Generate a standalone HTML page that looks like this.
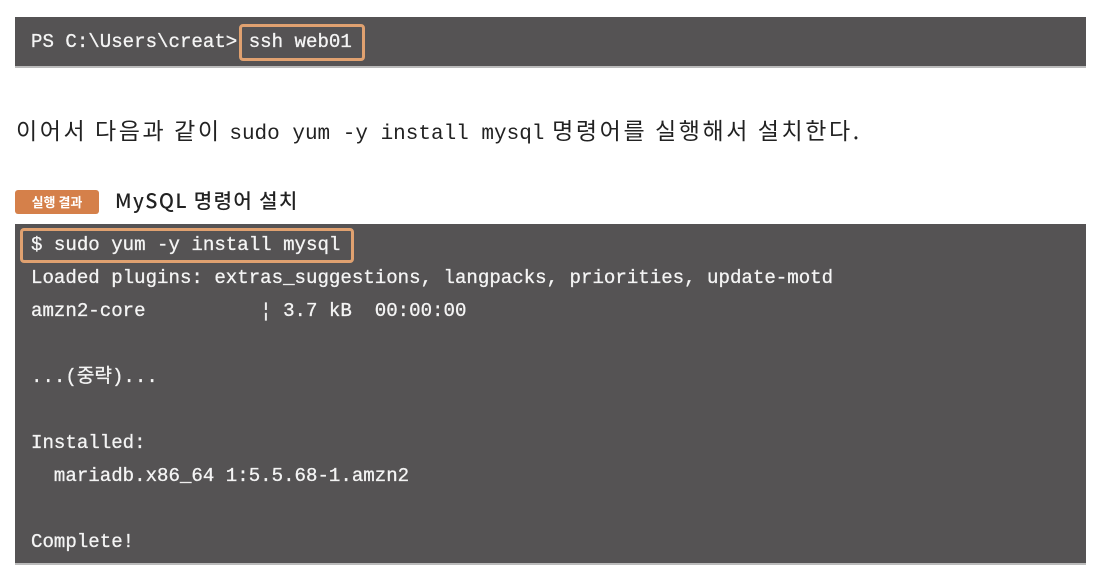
<!DOCTYPE html>
<html><head><meta charset="utf-8"><style>
body{margin:0;width:1098px;height:578px;background:#fff;position:relative;overflow:hidden;font-family:"Liberation Sans","Noto Sans CJK KR",sans-serif}
.mono{font-family:"Liberation Mono","Noto Sans CJK KR",monospace;font-size:19.1px;color:#f4f4f4;white-space:pre;-webkit-text-stroke:0.3px #f4f4f4}
.bar{position:absolute;left:15px;top:17px;width:1071px;height:49px;background:#555354;border-bottom:2px solid #bbb}
.hl{position:absolute;border:3px solid #e0a170;border-radius:4px;box-sizing:border-box}
.t{position:absolute;left:31px;line-height:20px}
</style></head><body>
<div class="bar"></div>
<div class="mono t" style="top:32px">PS C:\Users\creat> ssh web01</div>
<div class="hl" style="left:239px;top:24px;width:126px;height:37px"></div>
<div style="position:absolute;left:16px;top:112px;font-size:23px;letter-spacing:2.6px;color:#222;white-space:nowrap;font-family:'Noto Sans CJK KR',sans-serif">이어서 다음과 같이 <span style="font-family:'Liberation Mono',monospace;font-size:21px;letter-spacing:0">sudo yum -y install mysql</span> 명령어를 실행해서 설치한다.</div>
<div style="position:absolute;left:15px;top:190px;width:84px;height:24px;background:#d5804a;border-radius:3px;color:#fff;font-size:13px;font-weight:bold;text-align:center;line-height:24px;font-family:'Noto Sans CJK KR',sans-serif">실행 결과</div>
<div style="position:absolute;left:115px;top:186px;font-size:20px;letter-spacing:1.4px;color:#222;font-weight:500;font-family:'Noto Sans CJK KR',sans-serif;line-height:28px">MySQL 명령어 설치</div>
<div style="position:absolute;left:15px;top:224px;width:1071px;height:339px;background:#555354;border-bottom:2px solid #bbb"></div>
<div class="hl" style="left:20px;top:228px;width:334px;height:35px"></div>
<div class="mono" style="position:absolute;left:31px;top:229px;line-height:33px">$ sudo yum -y install mysql
Loaded plugins: extras_suggestions, langpacks, priorities, update-motd
amzn2-core          ¦ 3.7 kB  00:00:00

...(중략)...

Installed:
  mariadb.x86_64 1:5.5.68-1.amzn2

Complete!</div>
</body></html>
